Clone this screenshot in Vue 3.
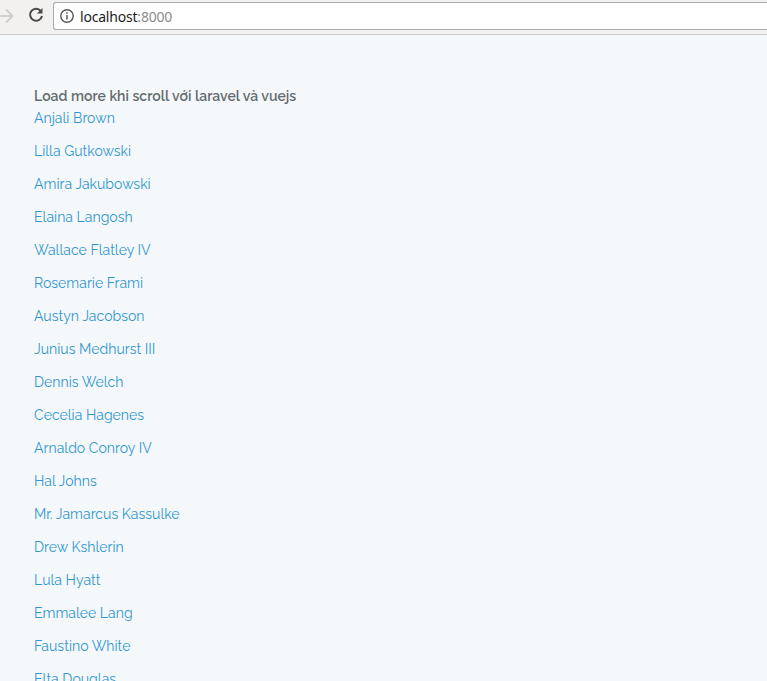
<script setup>
const names = ['Anjali Brown','Lilla Gutkowski','Amira Jakubowski','Elaina Langosh','Wallace Flatley IV','Rosemarie Frami','Austyn Jacobson','Junius Medhurst III','Dennis Welch','Cecelia Hagenes','Arnaldo Conroy IV','Hal Johns','Mr. Jamarcus Kassulke','Drew Kshlerin','Lula Hyatt','Emmalee Lang','Faustino White','Elta Douglas']
</script>

<template>
  <div class="page">
    <header class="toolbar">
      <svg class="arrow" width="16" height="16" viewBox="0 0 16 16"><path d="M0 8h13.5M7 1.5 13.5 8 7 14.5" fill="none" stroke="#cfcfcf" stroke-width="2"/></svg>
      <svg class="reload" width="16" height="16" viewBox="0 0 16 16"><path d="M12.9 4.1A6 6 0 1 0 14 9" fill="none" stroke="#4a4a4a" stroke-width="2"/><path d="M14.5 1v5.6H8.9z" fill="#4a4a4a"/></svg>
      <div class="omnibox">
        <svg width="16" height="16" viewBox="0 0 16 16"><circle cx="8" cy="8" r="6.2" fill="none" stroke="#555" stroke-width="1.4"/><path d="M8 7v4.5M8 4.2v1.6" stroke="#555" stroke-width="1.5"/></svg>
        <span class="host">localhost<span class="port">:8000</span></span>
      </div>
    </header>
    <main class="content">
      <div class="title">Load more khi scroll với laravel và vuejs</div>
      <a v-for="n in names" :key="n" class="name">{{ n }}</a>
    </main>
  </div>
</template>

<style>
html, body { margin: 0; overflow: hidden; }
</style>
<style scoped>
.page { width: 767px; height: 681px; overflow: hidden; background: #f5f8fa; font-family: Raleway, "Open Sans", "Noto Sans", sans-serif; }
.toolbar { height: 34px; background: #f2f1f0; border-bottom: 1px solid #cbcbcb; display: flex; align-items: flex-start; }
.arrow { margin: 8px 0 0 -1px; }
.reload { margin: 7px 0 0 13px; }
.omnibox { margin: 2px 0 0 9px; flex: 1; height: 26px; background: #fff; border: 1px solid #ababab; border-right: 0; border-radius: 3px 0 0 3px; display: flex; align-items: center; gap: 5px; padding-left: 5px; }
.host { font: 14px "Noto Sans", sans-serif; letter-spacing: -0.2px; color: #1c1c1c; }
.port { color: #8c8c8c; }
.content { padding: 51px 0 0 34px; font-size: 14px; letter-spacing: 0.03px; }
.title { font-weight: 600; color: #636b6f; line-height: 20px; margin-bottom: 2px; }
.name { display: block; color: #3097d1; line-height: 20px; margin-bottom: 13px; }
</style>
